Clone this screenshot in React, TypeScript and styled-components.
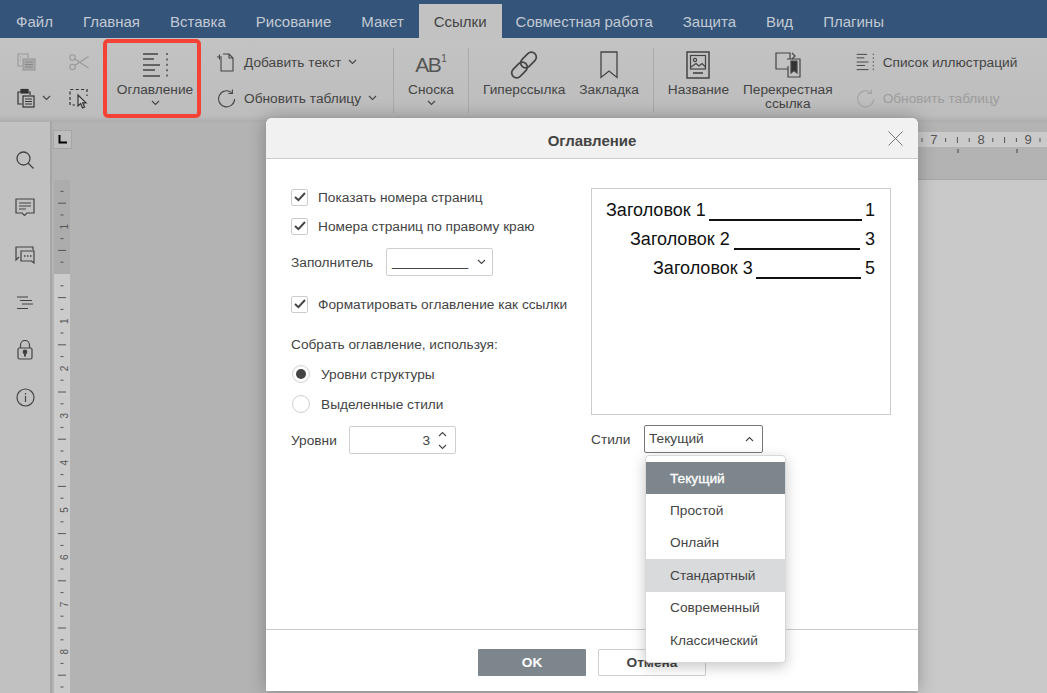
import React from "react";
import styled, { createGlobalStyle } from "styled-components";

const tabs = ["Файл", "Главная", "Вставка", "Рисование", "Макет", "Ссылки", "Совместная работа", "Защита", "Вид", "Плагины"];
const styleOptions = ["Текущий", "Простой", "Онлайн", "Стандартный", "Современный", "Классический"];

const Chevron = ({ up = false, color = "#444" }: { up?: boolean; color?: string }) => (
  <svg width="9" height="6" viewBox="0 0 9 6" fill="none" stroke={color} strokeWidth="1.1">
    <path d={up ? "M1 5L4.5 1.5L8 5" : "M1 1L4.5 4.5L8 1"} />
  </svg>
);

const TocIcon = ({ size = 26, color = "#444" }: { size?: number; color?: string }) => (
  <svg width={size} height={size} viewBox="0 0 26 26" fill="none" stroke={color} strokeWidth="1.4">
    <path d="M1 2H16M1 7H12M1 13H18M1 18H13M1 24H18" />
    <path d="M25 1V25" strokeDasharray="2 3.4" />
  </svg>
);

const RefreshIcon = ({ color = "#444" }: { color?: string }) => (
  <svg width="19" height="19" viewBox="0 0 19 19" fill="none" stroke={color} strokeWidth="1.1">
    <path d="M14.6 3.6A8 8 0 1 0 17.6 10" />
    <path d="M15.4 0.5V4.5H11.4" />
  </svg>
);

const AddTextIcon = () => (
  <svg width="17" height="19" viewBox="0 0 17 19" fill="none" stroke="#444" strokeWidth="1.1">
    <path d="M4 5V18H16V5L12 1H6" />
    <path d="M12 1V5H16" />
    <path d="M0 4H5M2.5 1.5V6.5" />
  </svg>
);

const CopyIcon = () => (
  <svg width="20" height="20" viewBox="0 0 20 20" fill="none" stroke="#999" strokeWidth="1.1">
    <path d="M5 14H1V2H11V6" />
    <path d="M3 5H4M3 8H4" />
    <rect x="6" y="7" width="12" height="11" fill="#aaa" />
    <path d="M8 10H16M8 12.5H16M8 15H16" stroke="#888" />
  </svg>
);

const PasteIcon = () => (
  <svg width="18" height="20" viewBox="0 0 18 20" fill="none" stroke="#333" strokeWidth="1.2">
    <path d="M5 16H1V4H4M11 4H13V7" />
    <rect x="4" y="1.5" width="7" height="3.5" fill="#333" />
    <rect x="6" y="8" width="11" height="11" />
    <path d="M8 11H15M8 13.5H15M8 16H15" />
  </svg>
);

const ScissorsIcon = () => (
  <svg width="20" height="17" viewBox="0 0 20 17" fill="none" stroke="#999" strokeWidth="1.1">
    <circle cx="3.5" cy="3.5" r="2.7" />
    <circle cx="3.5" cy="13" r="2.7" />
    <path d="M5.8 5L19.5 14M5.8 11.5L19.5 2.5" />
  </svg>
);

const SelectAllIcon = () => (
  <svg width="19" height="21" viewBox="0 0 19 21" fill="none" stroke="#333" strokeWidth="1.2">
    <path d="M1 12V1.5H18V8M1 14V17H6" strokeDasharray="3 2.4" />
    <path d="M9 7V18L11.6 15.6L13.6 20L15.6 19L13.6 14.8H17Z" fill="#ccc" />
  </svg>
);

const LinkIcon = () => (
  <svg width="30" height="30" viewBox="0 0 30 30" fill="none" stroke="#444" strokeWidth="1.7">
    <rect x="14.5" y="1" width="10" height="18" rx="5" transform="rotate(45 19.5 10)" />
    <rect x="5.5" y="11" width="10" height="18" rx="5" transform="rotate(45 10.5 20)" />
  </svg>
);

const BookmarkIcon = () => (
  <svg width="18" height="28" viewBox="0 0 18 28" fill="none" stroke="#444" strokeWidth="1.3">
    <path d="M1 1H17V26.5L9 20L1 26.5Z" />
  </svg>
);

const CaptionIcon = () => (
  <svg width="24" height="28" viewBox="0 0 24 28" fill="none" stroke="#444" strokeWidth="1.2">
    <rect x="1" y="1" width="22" height="26" strokeWidth="1.5" />
    <rect x="4.5" y="4.5" width="15" height="13.5" />
    <circle cx="9" cy="9" r="1.6" />
    <path d="M5 16L10 12.5L13 15L16 12.5L19.5 16" />
    <path d="M7 22H17" strokeWidth="1.6" />
  </svg>
);

const CrossRefIcon = () => (
  <svg width="26" height="26" viewBox="0 0 26 26" fill="none" stroke="#444" strokeWidth="1.2">
    <path d="M13 17H1V1H15V7" />
    <path d="M17 1L20 4L17 7" />
    <path d="M13 14V25H25V7H12" />
    <path d="M16 9H22V21L19 18.5L16 21Z" fill="#333" />
  </svg>
);

const SearchIcon = () => (
  <svg width="18" height="18" viewBox="0 0 18 18" fill="none" stroke="#444" strokeWidth="1.3">
    <circle cx="7.5" cy="7.5" r="6.5" />
    <path d="M12 12L17.5 17.5" />
  </svg>
);

const CommentIcon = () => (
  <svg width="20" height="19" viewBox="0 0 20 19" fill="none" stroke="#444" strokeWidth="1.2">
    <path d="M1 1H19V15H12L9.5 17.5L7 15H1Z" />
    <path d="M4 5H16M4 8H16M4 11H11" />
  </svg>
);

const ChatIcon = () => (
  <svg width="20" height="18" viewBox="0 0 20 18" fill="none" stroke="#444" strokeWidth="1.2">
    <path d="M1 12V1H18V4" />
    <path d="M1 12L1 14L4 11" />
    <path d="M6 5H19V17L16.5 15H6Z" />
    <path d="M9 10H10.5M12 10H13.5M15 10H16.5" strokeWidth="1.6" />
  </svg>
);

const HeadingsIcon = () => (
  <svg width="18" height="14" viewBox="0 0 18 14" fill="none" stroke="#444" strokeWidth="1.2">
    <path d="M1 1H12M4 4.5H16M6 8H17M1 12.5H12" />
  </svg>
);

const LockIcon = () => (
  <svg width="16" height="20" viewBox="0 0 16 20" fill="none" stroke="#444" strokeWidth="1.2">
    <rect x="1" y="8" width="14" height="11" rx="1.5" />
    <path d="M3.5 8V5A4.5 4.5 0 0 1 12.5 5V8" />
    <circle cx="8" cy="12" r="1.8" fill="#333" />
    <path d="M8 12V16.5" strokeWidth="2" />
  </svg>
);

const InfoIcon = () => (
  <svg width="19" height="19" viewBox="0 0 19 19" fill="none" stroke="#444" strokeWidth="1.2">
    <circle cx="9.5" cy="9.5" r="8.5" />
    <path d="M9.5 8V14M9.5 5V6.4" />
  </svg>
);

const CloseIcon = () => (
  <svg width="15" height="15" viewBox="0 0 15 15" fill="none" stroke="#777" strokeWidth="1">
    <path d="M0.5 0.5L14.5 14.5M14.5 0.5L0.5 14.5" />
  </svg>
);

const CheckMark = () => (
  <svg width="12" height="10" viewBox="0 0 12 10" fill="none" stroke="#444" strokeWidth="2">
    <path d="M1 5L4.4 8.2L11 1" />
  </svg>
);

// tick index k counts from the margin edge, a number every 4 ticks
const VerticalRuler = () => {
  const ticks = [];
  for (let k = -7; k <= 35; k++) {
    const y = 94 + k * 11.8;
    const r = ((k % 4) + 4) % 4;
    if (r === 0) {
      if (k !== 0) {
        ticks.push(
          <RulerLabel key={k} x={0} y={0} transform={`translate(11.5 ${y}) rotate(-90)`} textAnchor="middle">
            {Math.abs(k) / 4}
          </RulerLabel>
        );
      }
    } else {
      const half = r === 2 ? 4 : 1.5;
      ticks.push(<path key={k} d={`M${8 - half} ${y}H${8 + half}`} stroke="#555" strokeWidth="1" />);
    }
  }
  return (
    <svg width="16" height="513" viewBox="0 0 16 513">
      <rect width="16" height="94" fill="#acacac" />
      <rect y="94" width="16" height="419" fill="#cbcbcb" />
      {ticks}
    </svg>
  );
};

const HorizontalRuler = () => {
  const ticks = [];
  for (let k = 0; k < 12; k++) {
    const x = 4 + k * 11.8;
    if (k % 4 === 1) {
      ticks.push(
        <RulerLabel key={k} x={x} y={12} textAnchor="middle" $big>
          {7 + (k - 1) / 4}
        </RulerLabel>
      );
    } else {
      const long = k % 4 === 3;
      ticks.push(<path key={k} d={`M${x} ${long ? 5 : 6}V${long ? 11 : 10}`} stroke="#555" strokeWidth="1" />);
    }
  }
  return (
    <svg width="129" height="24" viewBox="0 0 129 24">
      {ticks}
      <path d="M40 17V21M99 17V21" stroke="#444" strokeWidth="1" />
    </svg>
  );
};

export default function App() {
  return (
    <>
      <GlobalStyle />
      <Screen>
        <TabBar>
          {tabs.map(tab => (
            <Tab key={tab} $active={tab === "Ссылки"}>{tab}</Tab>
          ))}
        </TabBar>

        <Toolbar>
          <ClipGroup>
            <ClipCell><CopyIcon /></ClipCell>
            <ClipCell><ScissorsIcon /></ClipCell>
            <ClipCell><PasteIcon /><ChevronGap><Chevron /></ChevronGap></ClipCell>
            <ClipCell><SelectAllIcon /></ClipCell>
          </ClipGroup>

          <TocButton>
            <IconSlot><TocIcon /></IconSlot>
            <BigLabel>Оглавление</BigLabel>
            <BigChevron><Chevron /></BigChevron>
          </TocButton>

          <SmallGroup $left={16} $width={176}>
            <SmallRow><SmallIcon><AddTextIcon /></SmallIcon>Добавить текст<ChevronGap><Chevron /></ChevronGap></SmallRow>
            <SmallRow><SmallIcon><RefreshIcon /></SmallIcon>Обновить таблицу<ChevronGap><Chevron /></ChevronGap></SmallRow>
          </SmallGroup>

          <Separator />
          <BigButton $width={74}>
            <IconSlot><FootnoteMark>AB<sup>1</sup></FootnoteMark></IconSlot>
            <BigLabel>Сноска</BigLabel>
            <BigChevron><Chevron /></BigChevron>
          </BigButton>
          <Separator />

          <LinkGroup>
            <BigButton>
              <IconSlot><LinkIcon /></IconSlot>
              <BigLabel>Гиперссылка</BigLabel>
            </BigButton>
            <BigButton>
              <IconSlot><BookmarkIcon /></IconSlot>
              <BigLabel>Закладка</BigLabel>
            </BigButton>
          </LinkGroup>
          <Separator />

          <LinkGroup>
            <BigButton>
              <IconSlot><CaptionIcon /></IconSlot>
              <BigLabel>Название</BigLabel>
            </BigButton>
            <BigButton>
              <IconSlot><CrossRefIcon /></IconSlot>
              <BigLabel>Перекрестная<br />ссылка</BigLabel>
            </BigButton>
          </LinkGroup>

          <SmallGroup $left={9} $width={180}>
            <SmallRow><SmallIcon><TocIcon size={18} /></SmallIcon>Список иллюстраций</SmallRow>
            <SmallRow $disabled><SmallIcon><RefreshIcon color="#a3a3a3" /></SmallIcon>Обновить таблицу</SmallRow>
          </SmallGroup>
        </Toolbar>

        <Workspace>
          <Sidebar>
            <SideItem><SearchIcon /></SideItem>
            <SideItem><CommentIcon /></SideItem>
            <SideItem><ChatIcon /></SideItem>
            <SideItem><HeadingsIcon /></SideItem>
            <SideItem><LockIcon /></SideItem>
            <SideItem><InfoIcon /></SideItem>
          </Sidebar>
          <RulerColumn>
            <TabStop>
              <svg width="9" height="9" viewBox="0 0 9 9" fill="none" stroke="#000" strokeWidth="2">
                <path d="M1.5 0V7.5H9" />
              </svg>
            </TabStop>
            <VerticalRuler />
          </RulerColumn>
          <Canvas>
            <TopRuler><HorizontalRuler /></TopRuler>
            <Page />
          </Canvas>
        </Workspace>

        <Dialog>
          <DialogHeader>
            Оглавление
            <CloseButton><CloseIcon /></CloseButton>
          </DialogHeader>
          <DialogBody>
            <FormColumn>
              <FormRow>
                <CheckBox><CheckMark /></CheckBox>
                <CheckLabel>Показать номера страниц</CheckLabel>
              </FormRow>
              <FormRow $top={1}>
                <CheckBox><CheckMark /></CheckBox>
                <CheckLabel>Номера страниц по правому краю</CheckLabel>
              </FormRow>
              <FormRow $top={8}>
                <FieldLabel $width={95}>Заполнитель</FieldLabel>
                <LeaderSelect>
                  __________
                  <Chevron />
                </LeaderSelect>
              </FormRow>
              <FormRow $top={14}>
                <CheckBox><CheckMark /></CheckBox>
                <CheckLabel>Форматировать оглавление как ссылки</CheckLabel>
              </FormRow>
              <FormRow $top={12}>Собрать оглавление, используя:</FormRow>
              <FormRow $top={2}>
                <Radio $checked />
                <RadioLabel>Уровни структуры</RadioLabel>
              </FormRow>
              <FormRow $top={2}>
                <Radio />
                <RadioLabel>Выделенные стили</RadioLabel>
              </FormRow>
              <FormRow $top={8}>
                <FieldLabel $width={58}>Уровни</FieldLabel>
                <Spinner>
                  3
                  <SpinArrows>
                    <Chevron up />
                    <Chevron />
                  </SpinArrows>
                </Spinner>
              </FormRow>
            </FormColumn>

            <PreviewColumn>
              <Preview>
                <PreviewLine $indent={0}>
                  <span>Заголовок 1</span><Leader $left={3} $right={3} /><span>1</span>
                </PreviewLine>
                <PreviewLine $indent={24}>
                  <span>Заголовок 2</span><Leader $left={4} $right={5} /><span>3</span>
                </PreviewLine>
                <PreviewLine $indent={47}>
                  <span>Заголовок 3</span><Leader $left={3} $right={4} /><span>5</span>
                </PreviewLine>
              </Preview>
              <StyleRow>
                <FieldLabel $width={53}>Стили</FieldLabel>
                <StyleSelect>
                  <SelectValue>Текущий</SelectValue>
                  <Chevron up />
                  <Dropdown>
                    {styleOptions.map((option, i) => (
                      <DropdownItem key={option} $selected={i === 0} $hover={i === 3}>{option}</DropdownItem>
                    ))}
                  </Dropdown>
                </StyleSelect>
              </StyleRow>
            </PreviewColumn>
          </DialogBody>
          <DialogFooter>
            <PrimaryButton>OK</PrimaryButton>
            <SecondaryButton>Отмена</SecondaryButton>
          </DialogFooter>
        </Dialog>
      </Screen>
    </>
  );
}

const GlobalStyle = createGlobalStyle`
  html, body {
    margin: 0;
    padding: 0;
    background: #b3b3b3;
    overflow: hidden;
  }
  *, *::before, *::after {
    box-sizing: border-box;
  }
`;

const Screen = styled.div`
  position: relative;
  width: 1047px;
  height: 693px;
  overflow: hidden;
  display: flex;
  flex-direction: column;
  font-family: "Liberation Sans", Arial, sans-serif;
  font-size: 13.7px;
  color: #444;
`;

const TabBar = styled.div`
  height: 38px;
  flex: none;
  padding-left: 1px;
  display: flex;
  align-items: flex-end;
  background: #34547a;
`;

const Tab = styled.div<{ $active?: boolean }>`
  height: 34px;
  padding: 0 15px;
  margin-right: ${p => (p.$active ? "-1px" : "0")};
  display: flex;
  align-items: center;
  font-size: 15px;
  background: ${p => (p.$active ? "#c2c2c2" : "transparent")};
  color: ${p => (p.$active ? "#444" : "#c3cad3")};
`;

const Toolbar = styled.div`
  height: 84px;
  flex: none;
  display: flex;
  align-items: flex-start;
  padding-top: 6px;
  background: linear-gradient(#c3c3c3, #bdbdbd 92%, #adadad);
`;

const ClipGroup = styled.div`
  width: 103px;
  flex: none;
  padding-left: 17px;
  display: grid;
  grid-template-columns: 52px 34px;
  grid-auto-rows: 36px;
`;

const ClipCell = styled.div`
  display: flex;
  align-items: center;
`;

const ChevronGap = styled.span`
  display: inline-flex;
  margin-left: 7px;
`;

const BigButton = styled.div<{ $width?: number }>`
  width: ${p => (p.$width ? `${p.$width}px` : "auto")};
  padding: 6px 7px 0;
  flex: none;
  display: flex;
  flex-direction: column;
  align-items: center;
  text-align: center;
`;

const TocButton = styled(BigButton)`
  position: relative;
  width: 98px;
  padding-left: 13px;
  padding-right: 7px;

  &::after {
    content: "";
    position: absolute;
    left: 0;
    right: 0;
    top: -5px;
    height: 79px;
    border: 4px solid #f44336;
    border-radius: 5px;
  }
`;

const IconSlot = styled.div`
  height: 30px;
  display: flex;
  align-items: center;
  justify-content: center;
`;

const BigLabel = styled.div`
  margin-top: 3px;
  line-height: 14px;
  white-space: nowrap;
`;

const BigChevron = styled.div`
  margin-top: 3px;
  display: flex;
`;

const FootnoteMark = styled.div`
  font-size: 21px;
  letter-spacing: -1.5px;
  line-height: 30px;
  color: #555;

  sup {
    font-size: 10px;
    line-height: 0;
    vertical-align: 10px;
    letter-spacing: 0;
    margin-left: 1px;
  }
`;

const SmallGroup = styled.div<{ $left: number; $width: number }>`
  margin-left: ${p => p.$left}px;
  width: ${p => p.$width}px;
  flex: none;
`;

const SmallRow = styled.div<{ $disabled?: boolean }>`
  height: 36px;
  display: flex;
  align-items: center;
  white-space: nowrap;
  color: ${p => (p.$disabled ? "#9c9c9c" : "#444")};
`;

const SmallIcon = styled.span`
  width: 27px;
  flex: none;
  display: inline-flex;
`;

const Separator = styled.div`
  width: 1px;
  height: 65px;
  margin-top: 4px;
  flex: none;
  background: #a9a9a9;
`;

const LinkGroup = styled.div`
  padding: 0 7px;
  flex: none;
  display: flex;
`;

const Workspace = styled.div`
  flex: 1;
  min-height: 0;
  display: flex;
  background: #b3b3b3;
`;

const Sidebar = styled.div`
  width: 52px;
  flex: none;
  padding-top: 14px;
  background: #c1c1c1;
  border-right: 2px solid #a6a6a6;
`;

const SideItem = styled.div`
  height: 47.6px;
  display: flex;
  align-items: center;
  justify-content: center;
`;

const RulerColumn = styled.div`
  width: 20px;
  flex: none;
  padding-top: 8px;
  display: flex;
  flex-direction: column;
  align-items: center;
`;

const TabStop = styled.div`
  width: 19px;
  height: 19px;
  flex: none;
  margin-bottom: 31px;
  display: flex;
  align-items: center;
  justify-content: center;
  background: #bdbdbd;
  border: 1px solid #a5a5a5;
`;

const RulerLabel = styled.text<{ $big?: boolean }>`
  font-family: "Liberation Sans", Arial, sans-serif;
  font-size: ${p => (p.$big ? "13px" : "10px")};
  fill: #555;
  dominant-baseline: ${p => (p.$big ? "auto" : "middle")};
`;

const Canvas = styled.div`
  flex: 1;
  min-width: 0;
  padding-top: 10px;
  display: flex;
  flex-direction: column;
  align-items: flex-end;
`;

const TopRuler = styled.div`
  width: 129px;
  height: 15px;
  flex: none;
  overflow: visible;
  background: #cacaca;
`;

const Page = styled.div`
  width: 129px;
  flex: 1;
  margin-top: 32px;
  background: #c9c9c9;
  border-top: 1px solid #a6a6a6;
`;

const Dialog = styled.div`
  position: absolute;
  left: 266px;
  top: 118px;
  width: 652px;
  height: 573px;
  display: flex;
  flex-direction: column;
  background: #fff;
  border-radius: 6px 6px 0 0;
  box-shadow: 0 0 18px rgba(0, 0, 0, 0.28);
`;

const DialogHeader = styled.div`
  position: relative;
  height: 41px;
  flex: none;
  padding-top: 4px;
  display: flex;
  align-items: center;
  justify-content: center;
  font-size: 15px;
  font-weight: bold;
  background: #f1f1f1;
  border-bottom: 1px solid #cbcbcb;
  border-radius: 6px 6px 0 0;
`;

const CloseButton = styled.div`
  position: absolute;
  right: 15px;
  top: 13px;
  display: flex;
`;

const DialogBody = styled.div`
  flex: 1;
  display: flex;
  padding: 24px 0 0 25px;
`;

const FormColumn = styled.div`
  width: 300px;
  flex: none;
`;

const FormRow = styled.div<{ $top?: number }>`
  height: 28px;
  margin-top: ${p => p.$top || 0}px;
  display: flex;
  align-items: center;
  white-space: nowrap;
`;

const CheckBox = styled.div`
  width: 17px;
  height: 17px;
  flex: none;
  display: flex;
  align-items: center;
  justify-content: center;
  background: #fff;
  border: 1px solid #ccc;
  border-radius: 2px;
`;

const CheckLabel = styled.span`
  margin-left: 10px;
`;

const FieldLabel = styled.span<{ $width: number }>`
  width: ${p => p.$width}px;
  flex: none;
`;

const InputBox = styled.div`
  height: 28px;
  display: flex;
  align-items: center;
  background: #fff;
  border: 1px solid #cfcfcf;
  border-radius: 2px;
`;

const LeaderSelect = styled(InputBox)`
  width: 107px;
  padding: 0 6px 0 5px;
  justify-content: space-between;
  line-height: 16px;
`;

const Spinner = styled(InputBox)`
  width: 107px;
  justify-content: flex-end;
  padding-right: 8px;
  gap: 8px;
`;

const SpinArrows = styled.div`
  display: flex;
  flex-direction: column;
  gap: 7px;
`;

const Radio = styled.div<{ $checked?: boolean }>`
  width: 18px;
  height: 18px;
  margin-left: 1px;
  flex: none;
  display: flex;
  align-items: center;
  justify-content: center;
  border: 1px solid #d2d2d2;
  border-radius: 50%;
  box-shadow: inset 0 0 1px rgba(0, 0, 0, 0.1);

  &::after {
    content: "";
    width: 10px;
    height: 10px;
    border-radius: 50%;
    background: ${p => (p.$checked ? "#444" : "transparent")};
  }
`;

const RadioLabel = styled.span`
  margin-left: 11px;
`;

const PreviewColumn = styled.div`
  width: 300px;
  flex: none;
  padding-top: 5px;
`;

const Preview = styled.div`
  height: 227px;
  padding: 7px 15px 0 14px;
  border: 1px solid #ccc;
  background: #fff;
`;

const PreviewLine = styled.div<{ $indent: number }>`
  height: 29px;
  margin-left: ${p => p.$indent}px;
  display: flex;
  align-items: center;
  font-size: 18px;
  color: #111;
  white-space: nowrap;
`;

const Leader = styled.div<{ $left: number; $right: number }>`
  flex: 1;
  height: 20px;
  margin: 0 ${p => p.$right}px 0 ${p => p.$left}px;
  border-bottom: 2px solid #111;
`;

const StyleRow = styled.div`
  margin-top: 10px;
  display: flex;
  align-items: center;
`;

const StyleSelect = styled(InputBox)`
  position: relative;
  width: 119px;
  padding: 0 8px 0 4px;
  justify-content: space-between;
  border-color: #777;
`;

const SelectValue = styled.span`
  margin-top: -2px;
`;

const Dropdown = styled.div`
  position: absolute;
  left: 0;
  top: 29px;
  width: 141px;
  padding: 6px 0;
  z-index: 5;
  background: #fff;
  border: 1px solid #d8d8d8;
  border-radius: 4px;
  box-shadow: 0 4px 14px rgba(0, 0, 0, 0.22);
`;

const DropdownItem = styled.div<{ $selected?: boolean; $hover?: boolean }>`
  height: 32.4px;
  padding-left: 24px;
  display: flex;
  align-items: center;
  background: ${p => (p.$selected ? "#7d868c" : p.$hover ? "#d8dadb" : "transparent")};
  color: ${p => (p.$selected ? "#fff" : "#444")};
  -webkit-text-stroke: ${p => (p.$selected ? "0.3px #fff" : "0")};
`;

const DialogFooter = styled.div`
  height: 62px;
  flex: none;
  display: flex;
  justify-content: center;
  gap: 12px;
  padding-top: 19px;
  border-top: 1px solid #cbcbcb;
`;

const PrimaryButton = styled.div`
  width: 108px;
  height: 27px;
  display: flex;
  align-items: center;
  justify-content: center;
  font-weight: bold;
  color: #fff;
  background: #7d868c;
  border-radius: 1px;
`;

const SecondaryButton = styled(PrimaryButton)`
  color: #444;
  background: #fff;
  border: 1px solid #cfcfcf;
`;
